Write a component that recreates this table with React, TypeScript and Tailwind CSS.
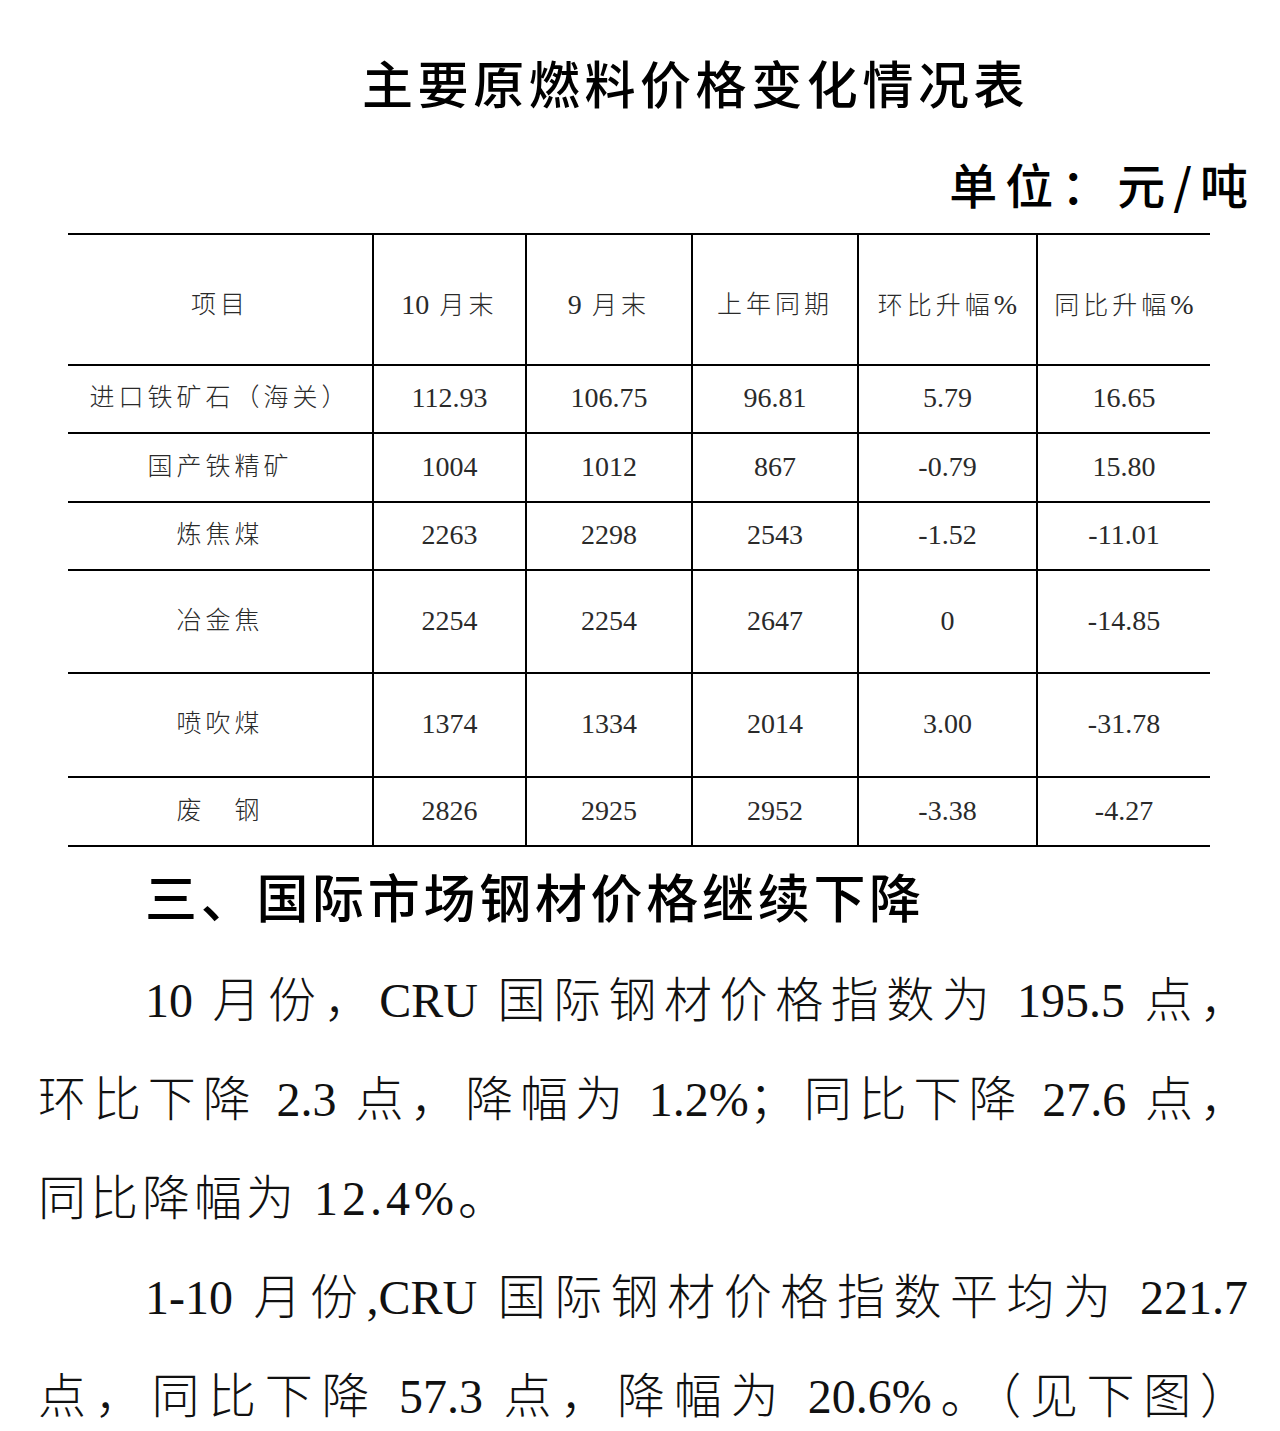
import React from "react";

const serif = "font-['Liberation_Serif','Noto_Sans_CJK_SC',serif]";
const hei = "font-['Noto_Sans_CJK_SC',sans-serif]";

const header = ["项目", "10 月末", "9 月末", "上年同期", "环比升幅%", "同比升幅%"];

const rows: { cells: string[]; h: string }[] = [
  { cells: ["进口铁矿石（海关）", "112.93", "106.75", "96.81", "5.79", "16.65"], h: "h-[68px]" },
  { cells: ["国产铁精矿", "1004", "1012", "867", "-0.79", "15.80"], h: "h-[69px]" },
  { cells: ["炼焦煤", "2263", "2298", "2543", "-1.52", "-11.01"], h: "h-[68px]" },
  { cells: ["冶金焦", "2254", "2254", "2647", "0", "-14.85"], h: "h-[103px]" },
  { cells: ["喷吹煤", "1374", "1334", "2014", "3.00", "-31.78"], h: "h-[104px]" },
  { cells: ["废　钢", "2826", "2925", "2952", "-3.38", "-4.27"], h: "h-[69px]" },
];

function Cell({ text, idx, h, head }: { text: string; idx: number; h: string; head?: boolean }) {
  const isLast = idx === 5;
  const isFirst = idx === 0;
  return (
    <td
      className={`${h} border-y-2 border-black p-0 text-center align-middle ${head ? "pt-[12px]" : ""} ${
        isFirst ? "" : "border-l-2"
      } ${isLast ? "" : "border-r-2"}`}
    >
      <span className="text-[25px] leading-none tracking-[4px] text-[#2a2a2a] font-light">
        {text.split(/(\d[\d.]*|-\d[\d.]*|%)/).map((part, i) =>
          /^-?\d/.test(part) || part === "%" ? (
            <span key={i} className="text-[28px] tracking-normal">
              {part}
            </span>
          ) : (
            <React.Fragment key={i}>{part}</React.Fragment>
          )
        )}
      </span>
    </td>
  );
}

export default function App() {
  return (
    <div className={`w-[1280px] h-[1431px] bg-white text-black overflow-hidden ${serif}`}>
      {/* Title */}
      <div className={`${hei} pt-[57px] pl-[362px] text-[51px] leading-[50px] tracking-[4.6px] font-medium text-black`}>
        主要原燃料价格变化情况表
      </div>
      {/* Unit */}
      <div className={`${hei} mt-[52px] pr-[24px] text-right text-[48px] leading-[48px] tracking-[8px] font-medium`}>
        单位：元/吨
      </div>

      {/* Table */}
      <div className="mt-[26px] pl-[68px]">
        <table className={`w-[1142px] table-fixed border-collapse ${serif}`}>
          <colgroup>
            <col className="w-[305px]" />
            <col className="w-[153px]" />
            <col className="w-[166px]" />
            <col className="w-[166px]" />
            <col className="w-[179px]" />
            <col className="w-[173px]" />
          </colgroup>
          <tbody>
            <tr>
              {header.map((t, i) => (
                <Cell key={i} text={t} idx={i} h="h-[131px]" head />
              ))}
            </tr>
            {rows.map((r, ri) => (
              <tr key={ri}>
                {r.cells.map((t, i) => (
                  <Cell key={i} text={t} idx={i} h={r.h} />
                ))}
              </tr>
            ))}
          </tbody>
        </table>
      </div>

      {/* Heading */}
      <div className={`${hei} mt-[23px] pl-[145px] text-[52px] leading-[52px] tracking-[3.7px] font-medium`}>
        三、国际市场钢材价格继续下降
      </div>

      {/* Body */}
      <div className="mt-[29px] pl-[38px] pr-[32px] text-[48px] leading-[99px] text-[#111] font-light">
        <div className="pl-[107px] text-justify [text-align-last:justify]">
          10 月份，CRU 国际钢材价格指数为 195.5 点，
        </div>
        <div className="text-justify [text-align-last:justify]">环比下降 2.3 点，降幅为 1.2%；同比下降 27.6 点，</div>
        <div className="tracking-[4px]">同比降幅为 12.4%。</div>
        <div className="pl-[107px] text-justify [text-align-last:justify]">
          1-10 月份,CRU 国际钢材价格指数平均为 221.7
        </div>
        <div className="text-justify [text-align-last:justify]">点，同比下降 57.3 点，降幅为 20.6%。（见下图）</div>
      </div>
    </div>
  );
}
